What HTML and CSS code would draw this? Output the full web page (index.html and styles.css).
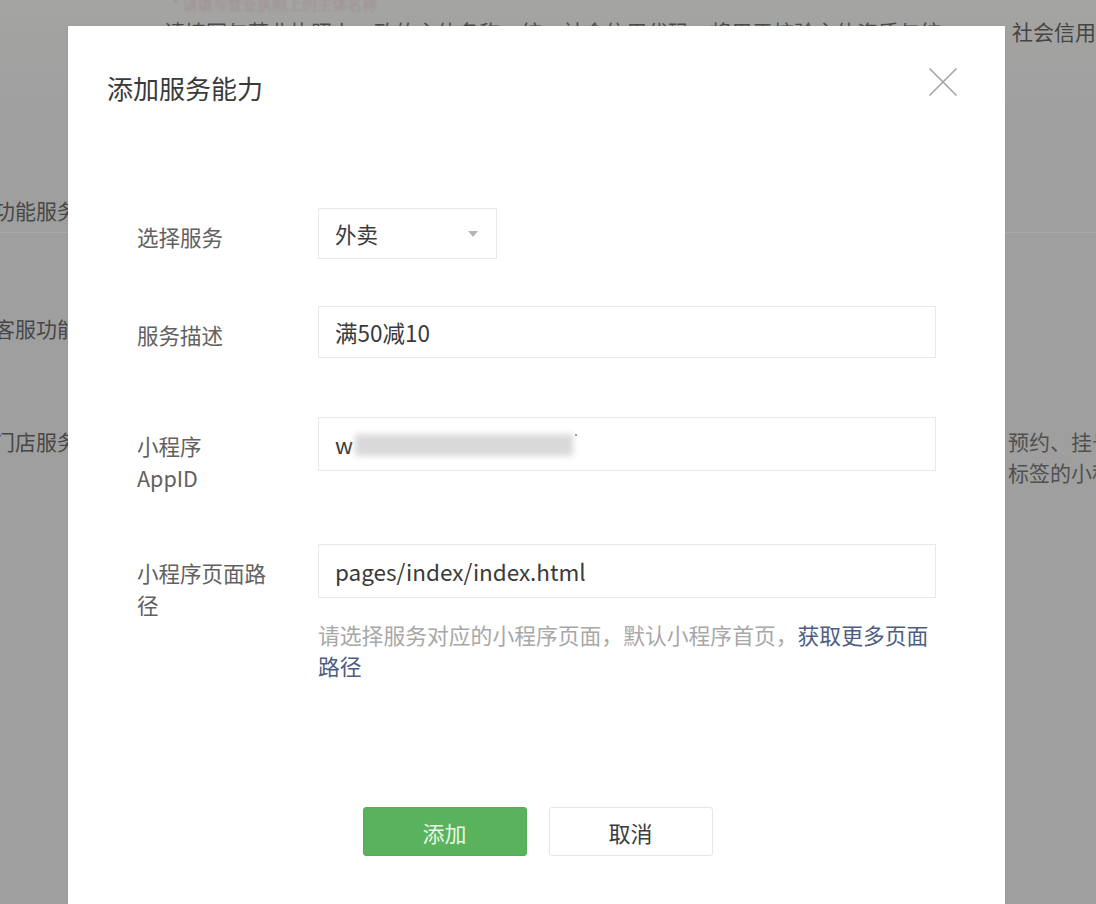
FILE: index.html
```html
<!DOCTYPE html>
<html lang="zh-CN">
<head>
<meta charset="utf-8">
<title>添加服务能力</title>
<link rel="stylesheet" href="styles.css">
</head>
<body>
<div class="page">
  <div class="bg-note">* 请填写营业执照上的主体名称</div>
  <div class="bg-row bg-row-intro">
    <span class="bg-label"></span>
    <span class="bg-desc">请填写与营业执照上一致的主体名称、统一社会信用代码，将用于校验主体资质与统一</span>
    <span class="bg-side">社会信用代码</span>
  </div>
  <div class="bg-row bg-row-func">
    <span class="bg-label">功能服务</span>
  </div>
  <div class="bg-row bg-row-cs">
    <span class="bg-label">客服功能</span>
  </div>
  <div class="bg-row bg-row-store">
    <span class="bg-label">门店服务</span>
    <span class="bg-desc"></span>
    <span class="bg-side">预约、挂号<br>标签的小程序</span>
  </div>
</div>

<div class="dialog">
  <div class="dialog-header">
    <h2 class="dialog-title">添加服务能力</h2>
    <button class="dialog-close" type="button" aria-label="关闭">
      <svg width="30" height="30" viewBox="0 0 30 30"><path d="M1.5 1.5 L28.5 28.5 M28.5 1.5 L1.5 28.5" stroke="#a3a3a3" stroke-width="1.6" fill="none"/></svg>
    </button>
  </div>

  <div class="form">
    <div class="form-row row-select">
      <label class="form-label">选择服务</label>
      <div class="form-field">
        <div class="select">
          <span>外卖</span>
          <svg class="select-arrow" width="10" height="6" viewBox="0 0 10 6"><path d="M0 0 H10 L5 6 Z" fill="#b5b5b5"/></svg>
        </div>
      </div>
    </div>

    <div class="form-row row-desc">
      <label class="form-label">服务描述</label>
      <div class="form-field">
        <div class="input">满50减10</div>
      </div>
    </div>

    <div class="form-row row-appid">
      <label class="form-label">小程序<br>AppID</label>
      <div class="form-field">
        <div class="input input-tall">w<span class="redacted"></span><span class="redacted-dot"></span></div>
      </div>
    </div>

    <div class="form-row row-path">
      <label class="form-label">小程序页面路径</label>
      <div class="form-field">
        <div class="input input-tall">pages/index/index.html</div>
        <p class="help">请选择服务对应的小程序页面，默认小程序首页，<a class="help-link" href="#">获取更多页面路径</a></p>
      </div>
    </div>
  </div>

  <div class="dialog-footer">
    <button class="btn btn-primary" type="button">添加</button>
    <button class="btn btn-default" type="button">取消</button>
  </div>
</div>
</body>
</html>
```

FILE: styles.css
```css
html, body {
  margin: 0;
  padding: 0;
}

body {
  width: 1096px;
  height: 904px;
  overflow: hidden;
  position: relative;
  background: #9f9f9f;
  font-family: "Noto Sans CJK SC", "Noto Sans", sans-serif;
}

/* ---------- background page (under the mask) ---------- */
.page {
  background: linear-gradient(#a5a6a4 0, #a2a3a1 40px, #9f9f9f 120px);
  height: 904px;
  color: #474747;
}

.bg-note {
  margin-top: -5px;
  padding-left: 172px;
  height: 18px;
  line-height: 18px;
  font-size: 15px;
  color: #a08f8f;
  filter: blur(1px);
  white-space: nowrap;
}

.bg-row {
  display: flex;
  font-size: 21px;
  line-height: 28px;
  white-space: nowrap;
}

.bg-label {
  width: 170px;
  margin-left: -6px;
  flex: none;
  overflow: hidden;
}

.bg-desc {
  width: 848px;
  flex: none;
  overflow: hidden;
  color: #4c4c4c;
}

.bg-side {
  flex: none;
  color: #454545;
}

.bg-row-intro {
  margin-top: 4px;
}

.bg-row-func {
  margin-top: 151px;
  padding-bottom: 8px;
  border-bottom: 1px solid #a9a9a9;
}

.bg-row-cs {
  margin-top: 81px;
}

.bg-row-store {
  margin-top: 84px;
  line-height: 31px;
}

.bg-row-store .bg-side {
  margin-left: -4px;
  color: #505050;
}

/* ---------- dialog ---------- */
.dialog {
  position: absolute;
  left: 68px;
  top: 26px;
  width: 937px;
  bottom: 0;
  background: #fff;
  box-shadow: 0 0 2px rgba(0, 0, 0, 0.08);
}

.dialog-header {
  display: flex;
  align-items: flex-start;
  justify-content: space-between;
  height: 36px;
  padding: 44px 47px 0 39px;
}

.dialog-title {
  margin: 0;
  font-size: 26px;
  line-height: 36px;
  font-weight: normal;
  color: #3a3a3a;
}

.dialog-close {
  border: 0;
  padding: 0;
  margin-top: -3px;
  background: none;
  width: 30px;
  height: 30px;
  display: flex;
}

.form {
  margin-top: 102px;
  padding-left: 69px;
}

.form-row {
  display: flex;
  align-items: flex-start;
}

.row-select { margin-bottom: 47px; }
.row-desc { margin-bottom: 59px; }
.row-appid { margin-bottom: 50px; }

.form-label {
  width: 181px;
  flex: none;
  padding-top: 13px;
  padding-right: 40px;
  box-sizing: border-box;
  font-size: 21.5px;
  line-height: 32px;
  color: #616161;
}

.form-field {
  width: 618px;
}

.select {
  width: 179px;
  height: 51px;
  box-sizing: border-box;
  border: 1px solid #e8e8e8;
  display: flex;
  align-items: center;
  justify-content: space-between;
  padding: 0 16px;
  font-size: 21.5px;
  color: #3c3c3c;
}

.select-arrow {
  margin-top: 1px;
  margin-right: 2px;
}

.input {
  height: 52px;
  box-sizing: border-box;
  border: 1px solid #e8e8e8;
  display: flex;
  align-items: center;
  padding: 0 16px;
  font-size: 22.5px;
  color: #3a3a3a;
}

.input-tall {
  height: 54px;
}

.redacted {
  display: inline-block;
  width: 218px;
  height: 22px;
  margin-left: 2px;
  margin-top: 2px;
  background: #d9d9d9;
  filter: blur(3px);
}

.redacted-dot {
  display: inline-block;
  width: 2px;
  height: 2px;
  margin-left: 2px;
  margin-top: -18px;
  background: #999;
}

.help {
  margin: 21px 0 0;
  font-size: 21.8px;
  line-height: 31px;
  color: #a8a8a8;
}

.help-link {
  color: #4e5d82;
  text-decoration: none;
}

.dialog-footer {
  display: flex;
  justify-content: center;
  gap: 22px;
  margin-top: 126px;
  padding-left: 2px;
}

.btn {
  width: 164px;
  height: 49px;
  border-radius: 3px;
  font-family: inherit;
  font-size: 22px;
  padding: 0;
}

.btn-primary {
  background: #58b35c;
  border: 1px solid #52ad56;
  color: #eaf7e4;
}

.btn-default {
  background: #fff;
  border: 1px solid #e6e6e6;
  color: #3c3c3c;
}
```
